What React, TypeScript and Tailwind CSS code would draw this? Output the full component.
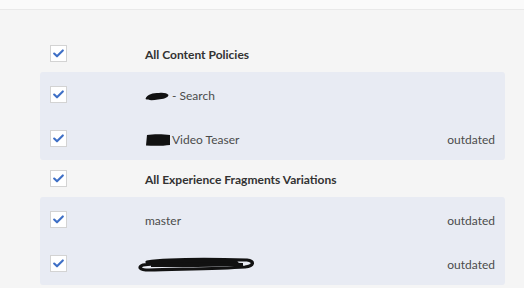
import React from 'react';

type Item = {
  label: React.ReactNode;
  status?: string;
};

const Check: React.FC = () => (
  <div className="w-[17px] h-[17px] bg-white border border-[#d3d3d3] flex items-center justify-center shrink-0">
    <svg width="11" height="9" viewBox="0 0 11 9" fill="none">
      <path
        d="M1.2 4.6 L4 7.3 L9.8 1.4"
        stroke="#3e6fc6"
        strokeWidth="2.1"
        strokeLinecap="round"
        strokeLinejoin="round"
      />
    </svg>
  </div>
);

const BlobSearch = () => (
  <svg width="24" height="9" viewBox="0 0 24 9" className="mr-[3px] mt-[2px]">
    <path d="M0.5 7 C2 2 8 1 14 1 C18 0.5 22 1 23.5 3 C23 6 18 7 13 7.5 C8 8.5 3 8.5 0.5 7 Z" fill="#111" />
  </svg>
);

const BlobTeaser = () => (
  <svg width="26" height="14" viewBox="0 0 26 14" className="mr-[1px]">
    <path d="M2 2 C8 1 18 1 25 2 L25 12 C18 13 8 13 1 12.5 Z" fill="#111" />
  </svg>
);

const Scribble = () => (
  <svg width="118" height="16" viewBox="0 0 118 16" className="-ml-[8px]">
    <path
      d="M10 5 C30 2 70 2 110 3 C118 4 117 9 108 10 C80 12 40 12 12 13 C2 13 1 10 6 8 C20 6 60 5 100 6"
      stroke="#111"
      strokeWidth="3.2"
      fill="none"
      strokeLinecap="round"
    />
    <path d="M14 7 C40 5 80 5 106 6 L106 9 C80 10 40 10 14 10 Z" fill="#111" />
  </svg>
);

const Header: React.FC<{ title: string }> = ({ title }) => (
  <div className="flex items-center h-[37px] px-[10px]">
    <Check />
    <div className="ml-[78px] mt-[3px] text-[12px] font-bold text-[#323232]">{title}</div>
  </div>
);

const Group: React.FC<{ items: Item[] }> = ({ items }) => (
  <div className="bg-[#e8ebf3] rounded-[3px]">
    {items.map((it, i) => (
      <div key={i} className="flex items-center h-[44px] px-[10px]">
        <Check />
        <div className="ml-[78px] mt-[3px] flex-1 flex items-center text-[12px] text-[#4b4b4b]">
          {it.label}
        </div>
        {it.status && <div className="mt-[3px] text-[12px] text-[#4b4b4b]">{it.status}</div>}
      </div>
    ))}
  </div>
);

export default function App() {
  return (
    <div
      className="w-[524px] h-[288px] bg-[#f5f5f5] overflow-hidden"
      style={{ fontFamily: 'Lato, "Open Sans", sans-serif' }}
    >
      <div className="h-[10px] bg-[#fafafa] border-b border-[#e9e9e9]" />
      <div className="pl-[40px] pr-[19px] pt-[25px]">
        <Header title="All Content Policies" />
        <Group
          items={[
            { label: <><BlobSearch /><span>- Search</span></> },
            { label: <><BlobTeaser /><span>Video Teaser</span></>, status: 'outdated' },
          ]}
        />
        <Header title="All Experience Fragments Variations" />
        <Group
          items={[
            { label: <span>master</span>, status: 'outdated' },
            { label: <Scribble />, status: 'outdated' },
          ]}
        />
      </div>
    </div>
  );
}
